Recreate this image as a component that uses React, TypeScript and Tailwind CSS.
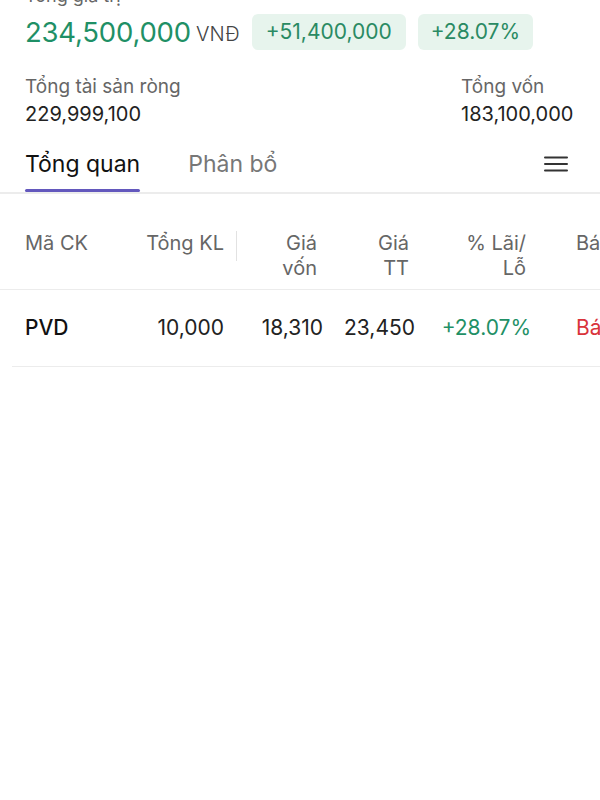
import React from "react";

// Summary numbers for the portfolio header
const summary = {
  total: "234,500,000",
  change: "+51,400,000",
  changePct: "+28.07%",
  netAssets: "229,999,100",
  capital: "183,100,000",
};

// Holdings shown in the table
const holdings = [
  { code: "PVD", qty: "10,000", cost: "18,310", price: "23,450", pnl: "+28.07%" },
];

const MenuIcon = () => (
  <svg width="24" height="16" viewBox="0 0 24 16" fill="none">
    <path d="M1 1.5h22M1 8h22M1 14.5h22" stroke="#333" strokeWidth="2" strokeLinecap="round" />
  </svg>
);

export default function App() {
  return (
    <div
      className="w-[600px] h-[800px] overflow-hidden bg-white text-[#222]"
      style={{ fontFamily: "Inter, 'Noto Sans', sans-serif" }}
    >
      {/* Summary block, scrolled so the label is cut at the top */}
      <div className="-mt-[15px] px-[25px]">
        <div className="text-[18px] leading-[22px] text-[#666]">Tổng giá trị</div>
        <div className="mt-[7px] flex items-center">
          <span className="text-[27.5px] leading-[36px] text-[#1f9066] tracking-[-0.2px]">
            {summary.total}
          </span>
          <span className="ml-[5px] mt-[3px] text-[20px] font-light text-[#444]">VNĐ</span>
          <span className="ml-[12px] h-[36px] px-[14px] rounded-[6px] bg-[#e7f4ed] text-[#2a8a63] text-[21px] flex items-center">
            {summary.change}
          </span>
          <span className="ml-[12px] h-[36px] px-[13px] rounded-[6px] bg-[#e7f4ed] text-[#2a8a63] text-[21px] flex items-center">
            {summary.changePct}
          </span>
        </div>

        <div className="mt-[25px] flex justify-between">
          <div>
            <div className="text-[19px] leading-[24px] text-[#666]">Tổng tài sản ròng</div>
            <div className="mt-[3px] text-[20px] leading-[24px] text-[#222]">{summary.netAssets}</div>
          </div>
          <div className="w-[114px]">
            <div className="text-[19px] leading-[24px] text-[#666]">Tổng vốn</div>
            <div className="mt-[3px] text-[20px] leading-[24px] text-[#222]">{summary.capital}</div>
          </div>
        </div>
      </div>

      {/* Tabs */}
      <div className="mt-[24px] flex items-end border-b-2 border-[#ececec] px-[25px]">
        <div className="flex flex-col">
          <span className="text-[23px] leading-[28px] text-[#111]">Tổng quan</span>
          <span className="mt-[11px] h-[3px] rounded-full bg-[#6358bd]" />
        </div>
        <span className="ml-[48px] mb-[14px] text-[23px] leading-[28px] text-[#777]">Phân bổ</span>
        <span className="ml-auto mb-[20px] mr-[7px]">
          <MenuIcon />
        </span>
      </div>

      {/* Table header */}
      <div className="mt-[37px] flex items-start pl-[25px] pb-[8px] border-b border-[#ececec] text-[20px] leading-[25px] text-[#666] whitespace-nowrap">
        <div className="w-[95px] shrink-0">Mã CK</div>
        <div className="w-[104px] shrink-0 text-right">Tổng KL</div>
        <div className="w-[13px] shrink-0 flex justify-end">
          <span className="w-px h-[30px] bg-[#e2e2e2]" />
        </div>
        <div className="w-[86px] shrink-0 text-right pr-[6px]">
          Giá
          <br />
          vốn
        </div>
        <div className="w-[92px] shrink-0 text-right pr-[6px]">
          Giá
          <br />
          TT
        </div>
        <div className="w-[116px] shrink-0 text-right pr-[5px]">
          % Lãi/
          <br />
          Lỗ
        </div>
        <div className="ml-[45px] shrink-0">Bán</div>
      </div>

      {/* Rows */}
      {holdings.map((h) => (
        <div
          key={h.code}
          className="ml-[12px] h-[77px] flex items-center pl-[13px] border-b border-[#ececec] text-[21px] whitespace-nowrap"
        >
          <div className="w-[95px] shrink-0 font-medium text-[#111]">{h.code}</div>
          <div className="w-[104px] shrink-0 text-right text-[#222]">{h.qty}</div>
          <div className="w-[99px] shrink-0 text-right text-[#222]">{h.cost}</div>
          <div className="w-[92px] shrink-0 text-right text-[#222]">{h.price}</div>
          <div className="w-[116px] shrink-0 text-right text-[#1f9066]">{h.pnl}</div>
          <div className="ml-[45px] shrink-0 text-[#d9343b]">Bán</div>
        </div>
      ))}
    </div>
  );
}
